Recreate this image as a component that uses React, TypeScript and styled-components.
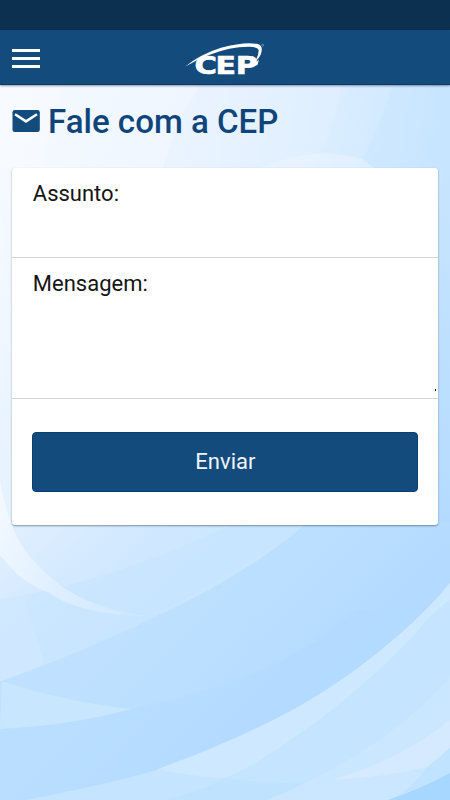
import React from "react";
import styled, { createGlobalStyle } from "styled-components";

const navy = "#124b7c";

const GlobalStyle = createGlobalStyle`
  * { box-sizing: border-box; }
  body { margin: 0; font-family: Roboto, "Liberation Sans", sans-serif; }
`;

const Screen = styled.div`
  position: relative;
  isolation: isolate;
  display: flex;
  flex-direction: column;
  width: 450px;
  height: 800px;
  overflow: hidden;
  background: #d4eaff;
`;

const Wallpaper = styled.svg`
  position: absolute;
  inset: 0;
  z-index: -1;
`;

const StatusBar = styled.div`
  flex: none;
  height: 30px;
  background: #0c3050;
`;

const Header = styled.header`
  flex: none;
  display: grid;
  grid-template-columns: 1fr auto 1fr;
  align-items: center;
  height: 55px;
  padding: 0 12px;
  background: ${navy};
  border-bottom: 1px solid #073a73;
  box-shadow: 0 1px 2px rgba(0, 0, 0, 0.4);
`;

const MenuButton = styled.button`
  display: flex;
  flex-direction: column;
  gap: 5px;
  width: 28px;
  margin-top: 3px;
  padding: 0;
  border: 0;
  background: none;
`;

const MenuLine = styled.span`
  height: 3px;
  background: #fff;
`;

const Logo = styled.svg`
  display: block;
  margin-top: 4px;
  overflow: visible;
`;

const TitleRow = styled.div`
  display: flex;
  align-items: center;
  gap: 8px;
  height: 40px;
  margin: 17px 12px 26px;
  color: ${navy};
`;

const MailIcon = styled.svg`
  flex: none;
  margin-top: -3px;
`;

const Title = styled.h1`
  margin: 0;
  font-size: 33.1px;
  font-weight: 500;
  line-height: 40px;
  color: #0f457b;
  white-space: nowrap;
`;

const Card = styled.form`
  width: 426px;
  height: 357px;
  margin-left: 12.4px;
  overflow: hidden;
  background: #fff;
  border-radius: 3px;
  box-shadow: 0 1px 2px rgba(0, 20, 40, 0.42);
`;

const Field = styled.label<{ $height: number }>`
  position: relative;
  display: flex;
  flex-direction: column;
  height: ${(p) => p.$height}px;
  padding: 11px 20.4px 0;
  border-bottom: 1px solid #d3d6d9;
  font-size: 22px;
  line-height: 29px;
  color: #151515;
`;

const controlCss = `
  width: 100%;
  flex: 1;
  min-height: 0;
  padding: 0;
  border: 0;
  outline: 0;
  resize: none;
  background: transparent;
  font: inherit;
`;

const TextInput = styled.input`${controlCss}`;
const TextArea = styled.textarea`${controlCss}`;

const ResizeGrip = styled.span`
  position: absolute;
  right: 2px;
  bottom: 7px;
  width: 1px;
  height: 2px;
  background: #111;
`;

const Submit = styled.button`
  display: block;
  width: 386px;
  height: 60px;
  margin: 33px 0 0 20px;
  padding: 0 0 1px;
  border: 1px solid #0a3f75;
  border-radius: 4px;
  background: ${navy};
  color: #f1f4f8;
  font: 400 22px/1 Roboto, sans-serif;
`;

function Background() {
  return (
    <Wallpaper width="450" height="800" viewBox="0 0 450 800" aria-hidden="true">
      <defs>
        <linearGradient id="sky" gradientUnits="userSpaceOnUse" x1="0" y1="85" x2="450" y2="150">
          <stop offset="0" stopColor="#f6faff" />
          <stop offset="0.4" stopColor="#eff6ff" />
          <stop offset="0.75" stopColor="#dceeff" />
          <stop offset="1" stopColor="#c8e5ff" />
        </linearGradient>
        <linearGradient id="descend" gradientUnits="userSpaceOnUse" x1="0" y1="160" x2="0" y2="520">
          <stop offset="0" stopColor="#b4dbff" stopOpacity="0" />
          <stop offset="1" stopColor="#b4dbff" />
        </linearGradient>
        <linearGradient id="edge" gradientUnits="userSpaceOnUse" x1="0" y1="170" x2="0" y2="524">
          <stop offset="0" stopColor="#eaf4ff" stopOpacity="0" />
          <stop offset="1" stopColor="#e4f1ff" />
        </linearGradient>
        <linearGradient id="mid" gradientUnits="userSpaceOnUse" x1="10" y1="510" x2="130" y2="650">
          <stop offset="0" stopColor="#e2f0ff" />
          <stop offset="0.5" stopColor="#d3e9ff" />
          <stop offset="1" stopColor="#c8e6ff" />
        </linearGradient>
        <linearGradient id="deep" gradientUnits="userSpaceOnUse" x1="170" y1="590" x2="290" y2="710">
          <stop offset="0" stopColor="#bfe1ff" />
          <stop offset="1" stopColor="#b4dbff" />
        </linearGradient>
        <linearGradient id="ribbon" gradientUnits="userSpaceOnUse" x1="0" y1="520" x2="150" y2="616">
          <stop offset="0" stopColor="#f1f8ff" />
          <stop offset="0.5" stopColor="#deeeff" />
          <stop offset="1" stopColor="#cde7ff" />
        </linearGradient>
      </defs>
      <rect width="450" height="800" fill="url(#sky)" />
      <path d="M63 85Q48 125 43 168H0V85Z" fill="#fff" fillOpacity=".2" />
      <path d="M200 85Q174 125 163 168H309Q332 130 342 85Z" fill="#e2f1ff" fillOpacity=".35" />
      <path d="M342 85Q334 130 315 168H450V85Z" fill="#cfe7ff" fillOpacity=".18" />
      <path d="M394 85Q380 125 359 168H450V85Z" fill="#c5e3ff" fillOpacity=".3" />
      <path d="M260 168Q315 145 362 159L374 168Z" fill="#f2f8ff" fillOpacity=".4" />
      <path d="M0 200Q14 300 0 430Z" fill="#fff" fillOpacity=".25" />
      <rect x="0" y="170" width="14" height="354" fill="url(#edge)" />
      <rect x="225" y="160" width="225" height="364" fill="url(#descend)" />

      <path d="M0 523H450V800H0Z" fill="url(#mid)" />
      <path d="M0 599Q95 586 212 534L240 520H320L154 617Q85 652 0 682Z" fill="#c6e5ff" fillOpacity=".6" />
      <path d="M0 598Q15 594 23 592L44 664L0 682Z" fill="#d8ebff" fillOpacity=".45" />
      <path d="M0 480Q3 500 9 516C17 545 33 564 64 588C92 606 124 614 150 616C108 616 72 609 48 592C22 583 10 567 0 555Z" fill="url(#ribbon)" />

      <path d="M2 681Q88 650 154 617Q242 578 307 523H450V800H0V681Z" fill="url(#deep)" />
      <path d="M0 728Q75 723 140 707Q182 698 225 684Q300 660 356 610H450V800H0Z" fill="#b3dbff" fillOpacity=".35" />
      <path d="M2 681Q55 700 131 709Q74 725 0 729Z" fill="#c9e6ff" />

      <path d="M25 800Q100 786 160 769Q240 739 300 706Q355 674 400 634Q430 608 450 583V800Z" fill="#c5e4ff" />
      <path d="M158 769Q240 739 300 706Q355 674 400 634Q430 608 450 583V600Q430 614 415 634L397 652Q350 700 292 739Q250 768 225 778Q185 776 158 769Z" fill="#cee8ff" />
      <path d="M165 800Q205 790 225 778Q265 785 312 782Q285 792 267 800Z" fill="#bce0ff" fillOpacity=".65" />
      <path d="M267 800Q382 753 450 677V774L388 800Z" fill="#cbe6ff" />
      <path d="M332 780Q400 760 450 720V748L428 767Q380 778 332 780Z" fill="#d5eaff" />
      <path d="M388 800Q412 790 425 769L450 748V774L388 800Z" fill="#c0e3ff" />
      <path d="M388 800Q420 789 450 773V800Z" fill="#a7d7ff" />
    </Wallpaper>
  );
}

function CepLogo() {
  return (
    <Logo width="80" height="34" viewBox="185 42 80 34" aria-label="CEP">
      <g fill="#fff" stroke="#fff" strokeWidth="0.6" fontFamily="DejaVu Sans" fontWeight="700" fontSize="24.6">
        <text x="194.5" y="73.7" textLength="22.5" lengthAdjust="spacingAndGlyphs">C</text>
        <text x="215.6" y="73.7" textLength="20.5" lengthAdjust="spacingAndGlyphs">E</text>
        <text x="235.7" y="73.7" textLength="22" lengthAdjust="spacingAndGlyphs">P</text>
      </g>
      <path d="M185.3 66.5Q201 54 221 47.8Q244 41.5 257 43.8Q262.5 45.3 261.7 50.5Q261 57 255.5 61Q258.8 55 258.7 50Q257.5 47 249 46.7Q230 46.6 209 55Q196 60 185.3 66.5Z" fill="#fff" />
      <path d="M252 67L259 59.5L257.5 65Z" fill="#fff" />
      <circle cx="262.7" cy="45.2" r="1" fill="none" stroke="#8aa9c5" strokeWidth=".6" />
    </Logo>
  );
}

export default function App() {
  return (
    <>
      <GlobalStyle />
      <Screen>
        <Background />
        <StatusBar />
        <Header>
          <MenuButton aria-label="Menu">
            <MenuLine />
            <MenuLine />
            <MenuLine />
          </MenuButton>
          <CepLogo />
        </Header>
        <TitleRow>
          <MailIcon width="28" height="22" viewBox="0 0 28 22" aria-hidden="true">
            <rect x="0.5" width="27.3" height="22" rx="2.3" fill={navy} />
            <path d="M3 4.2L14 11.4L25 4.2" fill="none" stroke="#f8fbff" strokeWidth="2.5" />
          </MailIcon>
          <Title>Fale com a CEP</Title>
        </TitleRow>
        <Card>
          <Field $height={90}>
            Assunto:
            <TextInput type="text" />
          </Field>
          <Field $height={141}>
            Mensagem:
            <TextArea />
            <ResizeGrip />
          </Field>
          <Submit type="button">Enviar</Submit>
        </Card>
      </Screen>
    </>
  );
}
